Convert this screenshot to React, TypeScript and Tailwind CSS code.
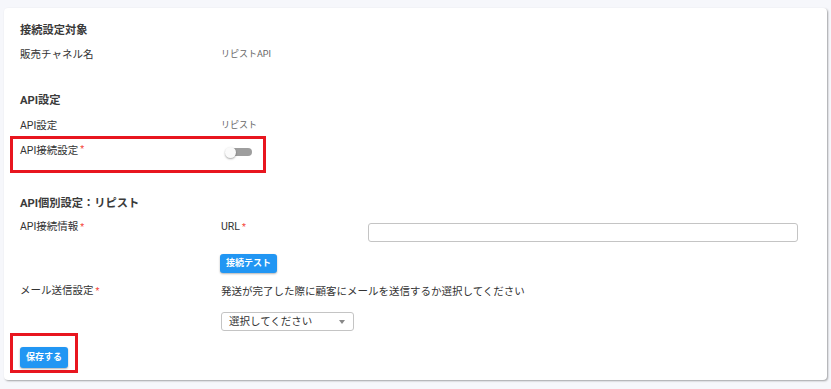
import { useState } from 'react';

const font = { fontFamily: 'Roboto, "Noto Sans CJK JP", sans-serif' };

function Req() {
  return <span className="ml-[2px] text-[#f44336] text-[9px] align-top">*</span>;
}

export default function App() {
  const [on, setOn] = useState(false);

  return (
    <div className="w-[831px] h-[389px] bg-[#f6f7fb] pt-[8px] px-[4px]" style={font}>
      <div className="relative w-[823px] h-[372px] bg-white rounded-[4px] shadow-[1px_1px_2px_rgba(0,0,0,0.35)] pt-[11px] pl-[16px] pr-[29px] text-[#333]">
        {/* 接続設定対象 */}
        <div className="h-[24px] flex items-center text-[11.25px] font-bold text-[#3a3a3a]">接続設定対象</div>
        <div className="h-[24px] flex items-center">
          <div className="w-[201px] text-[10.5px]">販売チャネル名</div>
          <div className="text-[9px] text-[#666]">リピストAPI</div>
        </div>

        {/* API設定 */}
        <div className="mt-[22px] h-[24px] flex items-center text-[11.25px] font-bold text-[#3a3a3a]">API設定</div>
        <div className="h-[26px] flex items-center">
          <div className="w-[201px] text-[10.5px]">API設定</div>
          <div className="text-[9px] text-[#666]">リピスト</div>
        </div>
        <div className="relative h-[26px] flex items-center">
          <span className="absolute left-[-10px] top-[-3px] w-[256px] h-[37px] border-[3px] border-[#e8161f]" />
          <div className="w-[201px] text-[10.5px] -mt-[3px]">
            API接続設定
            <Req />
          </div>
          <button onClick={() => setOn(!on)} className="relative w-[27px] h-[12px] ml-[4px]">
            <span className="absolute left-[4px] right-[0px] top-[2px] h-[8px] rounded-full bg-[#9e9e9e]" />
            <span
              className={
                'absolute top-[0.5px] w-[11px] h-[11px] rounded-full bg-[#fafafa] shadow-[0_1px_2px_rgba(0,0,0,0.35)] ' +
                (on ? 'left-[16px]' : 'left-[0px]')
              }
            />
          </button>
        </div>

        {/* API個別設定 */}
        <div className="mt-[27px] h-[24px] flex items-center text-[11.25px] font-bold text-[#3a3a3a]">
          API個別設定：リピスト
        </div>
        <div className="mt-[4px] flex">
          <div className="w-[201px] text-[10.5px] leading-[14px]">
            API接続情報
            <Req />
          </div>
          <div className="flex-1">
            <div className="flex">
              <div className="w-[147px] text-[10.5px] leading-[14px]">
                URL
                <Req />
              </div>
              <input className="mt-[3px] flex-1 h-[19px] border border-[#c4c4c4] rounded-[3px] outline-none px-[4px] text-[10px]" />
            </div>
            <button className="mt-[12px] -ml-[1px] w-[57px] h-[19px] rounded-[3px] bg-[#2196f3] text-white text-[9px] font-bold shadow-[0_1px_2px_rgba(0,0,0,0.3)]">
              接続テスト
            </button>
          </div>
        </div>

        <div className="mt-[11px] flex">
          <div className="w-[201px] text-[10.5px] leading-[14px]">
            メール送信設定
            <Req />
          </div>
          <div className="flex-1">
            <div className="text-[10.5px] leading-[14px] mt-[1px] text-[#333]">
              発送が完了した際に顧客にメールを送信するか選択してください
            </div>
            <div className="mt-[13px] w-[133px] h-[19px] border border-[#c4c4c4] rounded-[3px] flex items-center justify-between pl-[7px] pr-[8px]">
              <span className="text-[10.5px] text-[#333]">選択してください</span>
              <span className="w-0 h-0 border-l-[3.5px] border-r-[3.5px] border-t-[4px] border-l-transparent border-r-transparent border-t-[#888]" />
            </div>
          </div>
        </div>

        {/* 保存 */}
        <div className="relative mt-[12px] w-[48px] h-[21px]">
          <span className="absolute left-[-10px] top-[-10px] w-[68px] h-[40px] border-[3px] border-[#e8161f]" />
          <button className="relative w-[48px] h-[21px] rounded-[3px] bg-[#2196f3] text-white text-[9px] font-bold shadow-[0_1px_2px_rgba(0,0,0,0.3)]">
            保存する
          </button>
        </div>
      </div>
    </div>
  );
}
